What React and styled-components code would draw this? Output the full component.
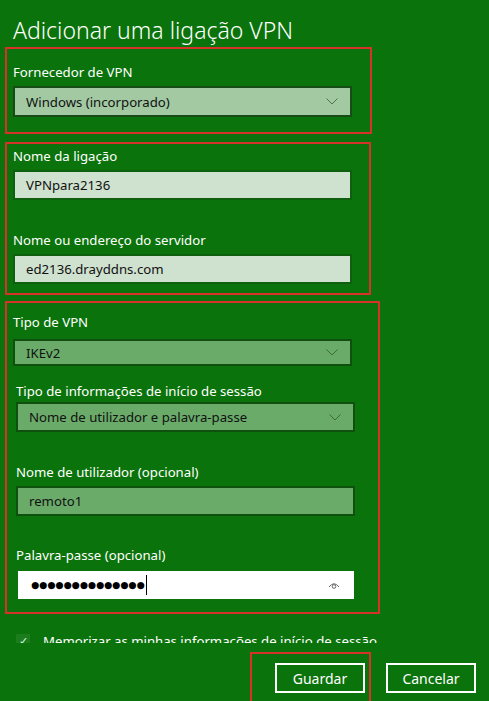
import React from "react";
import styled, { createGlobalStyle } from "styled-components";

const Global = createGlobalStyle`
  html, body { margin: 0; padding: 0; background: #0b730b; }
  * { box-sizing: border-box; }
`;

const Page = styled.div`
  width: 489px;
  height: 701px;
  overflow: hidden;
  display: flex;
  flex-direction: column;
  background: #0b730b;
  color: #fff;
  font-family: "Noto Sans", "Open Sans", sans-serif;
`;

const Scroll = styled.div`
  height: 643px;
  flex: none;
  overflow: hidden;
`;

const Title = styled.h1`
  margin: 14px 0 0 13px;
  font-size: 23px;
  line-height: 32px;
  font-weight: 300;
`;

const Section = styled.section`
  border: 2px solid #d6312b;
  margin-left: 5px;
  width: ${(p) => p.$w}px;
  margin-top: ${(p) => p.$top}px;
  padding: ${(p) => p.$pad};
`;

const Group = styled.div`
  padding-left: ${(p) => p.$inset || 0}px;
`;

const Label = styled.div`
  font-size: 13.2px;
  line-height: 20px;
  margin-top: ${(p) => p.$mt || 0}px;
  margin-bottom: ${(p) => p.$mb || 0}px;
`;

const tones = {
  pale: { bg: "#a2c9a2", border: "#174c17" },
  light: { bg: "#cfe2cf", border: "#0e5f0e" },
  mid: { bg: "#6aab6a", border: "#0f500f" },
  white: { bg: "#ffffff", border: "#ffffff" },
};

const Field = styled.div`
  width: ${(p) => p.$w || 339}px;
  height: ${(p) => p.$h || 30}px;
  margin-left: ${(p) => p.$ml || 0}px;
  background: ${(p) => tones[p.$tone].bg};
  border: 2px solid ${(p) => tones[p.$tone].border};
  display: flex;
  align-items: center;
  padding: 0 12px 0 11px;
  color: #111;
  font-size: 13.2px;
`;

const Value = styled.span`
  flex: 1;
  white-space: nowrap;
`;

const Dots = styled.span`
  font-family: "DejaVu Sans", sans-serif;
  font-size: 9.3px;
  color: #000;
  line-height: 1;
`;

const Caret = styled.span`
  display: inline-block;
  width: 1px;
  height: 20px;
  background: #000;
  margin-left: 1px;
`;

const Spacer = styled.span`
  flex: 1;
`;

const CheckRow = styled.div`
  display: flex;
  align-items: center;
  gap: 13px;
  margin: 17px 0 0 16px;
  font-size: 13.2px;
  line-height: 20px;
  white-space: nowrap;
`;

const CheckBox = styled.span`
  width: 14px;
  height: 14px;
  display: flex;
  align-items: center;
  justify-content: center;
  background: #1d7d1d;
  color: #dfe;
  font-size: 11px;
`;

const Bar = styled.div`
  flex: 1;
  display: flex;
  justify-content: flex-end;
  align-items: flex-start;
  padding-right: 13px;
`;

const Frame = styled.div`
  border: 2px solid #d6312b;
  margin-top: 9px;
  height: 60px;
  padding: 9px 4px 0 23px;
`;

const Button = styled.button`
  width: 90px;
  height: 30px;
  margin-top: ${(p) => p.$mt || 0}px;
  margin-left: ${(p) => p.$ml || 0}px;
  background: transparent;
  border: 2px solid #fff;
  color: #fff;
  font-family: inherit;
  font-size: 14px;
  padding: 0;
`;

const Chevron = ({ color = "#4a744a" }) => (
  <svg width="12" height="7" viewBox="0 0 12 7">
    <polyline points="0.5,0.5 6,6 11.5,0.5" fill="none" stroke={color} strokeWidth="1" />
  </svg>
);

const Eye = () => (
  <svg width="12" height="9" viewBox="0 0 12 9">
    <path d="M1 6 Q6 -0.5 11 6" fill="none" stroke="#666" strokeWidth="1" />
    <circle cx="6" cy="5.5" r="1.8" fill="none" stroke="#666" strokeWidth="1" />
  </svg>
);

export default function App() {
  return (
    <Page>
      <Global />
      <Scroll>
        <Title>Adicionar uma ligação VPN</Title>

        <Section $w={367} $top={1} $pad="13px 0 15px 6px">
          <Label $mb={4}>Fornecedor de VPN</Label>
          <Field $tone="pale" $h={31}>
            <Value>Windows (incorporado)</Value>
            <Chevron />
          </Field>
        </Section>

        <Section $w={366} $top={8} $pad="2px 0 9px 6px">
          <Label $mb={4}>Nome da ligação</Label>
          <Field $tone="light">
            <Value>VPNpara2136</Value>
          </Field>
          <Label $mt={30} $mb={4}>Nome ou endereço do servidor</Label>
          <Field $tone="light">
            <Value>ed2136.drayddns.com</Value>
          </Field>
        </Section>

        <Section $w={375} $top={6} $pad="9px 0 13px 6px">
          <Label $mb={7}>Tipo de VPN</Label>
          <Field $tone="mid" $h={27}>
            <Value>IKEv2</Value>
            <Chevron color="#3d6a3d" />
          </Field>
          <Group $inset={3}>
            <Label $mt={15} $mb={1}>Tipo de informações de início de sessão</Label>
            <Field $tone="mid">
              <Value>Nome de utilizador e palavra-passe</Value>
              <Chevron color="#3d6a3d" />
            </Field>
            <Label $mt={30} $mb={4}>Nome de utilizador (opcional)</Label>
            <Field $tone="mid">
              <Value>remoto1</Value>
            </Field>
            <Label $mt={29} $mb={6}>Palavra-passe (opcional)</Label>
            <Field $tone="white" $w={336} $h={28} $ml={2}>
              <Dots>●●●●●●●●●●●●●●</Dots>
              <Caret />
              <Spacer />
              <Eye />
            </Field>
          </Group>
        </Section>

        <CheckRow>
          <CheckBox>✓</CheckBox>
          Memorizar as minhas informações de início de sessão
        </CheckRow>
      </Scroll>
      <Bar>
        <Frame>
          <Button>Guardar</Button>
        </Frame>
        <Button $mt={20} $ml={15}>Cancelar</Button>
      </Bar>
    </Page>
  );
}
